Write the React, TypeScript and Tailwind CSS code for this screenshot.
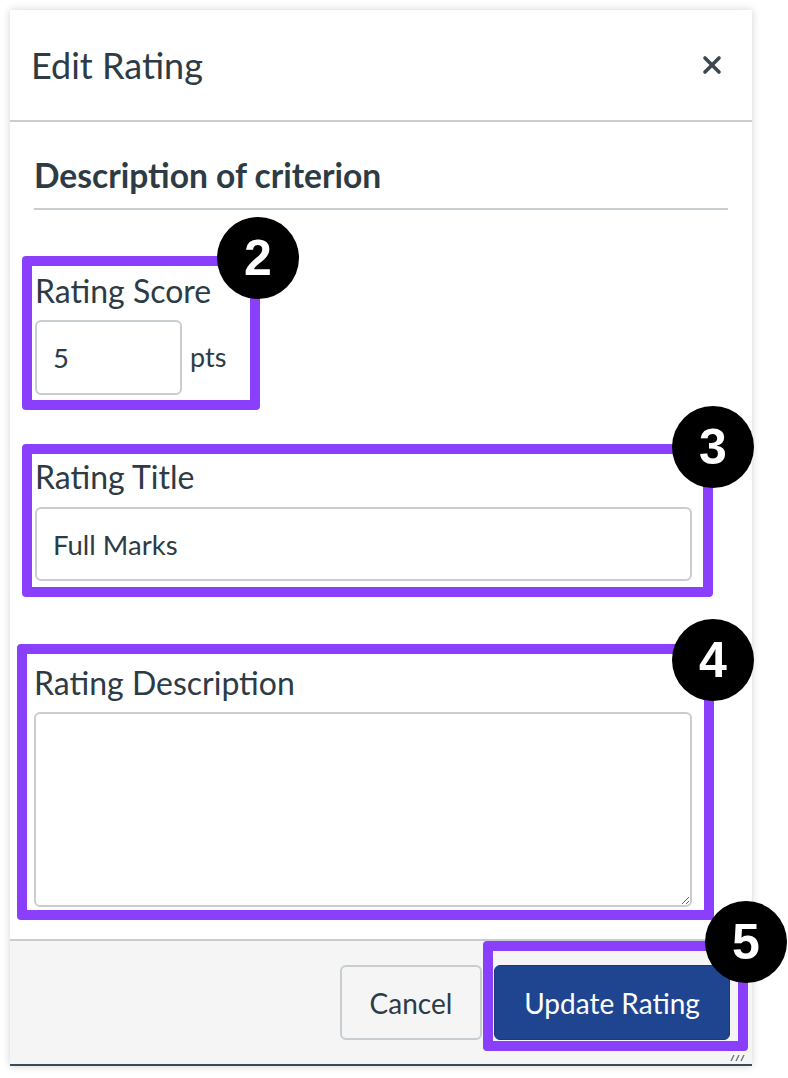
import React from "react"

const font = { fontFamily: "Lato, 'Noto Sans', sans-serif" }

function Badge({ n, className }: { n: string; className: string }) {
  return (
    <div
      className={`absolute z-10 flex h-[82px] w-[82px] items-center justify-center rounded-full bg-black text-[50px] font-bold leading-none text-white ${className}`}
      style={{ fontFamily: "'Liberation Sans', Arial, sans-serif" }}
    >
      {n}
    </div>
  )
}

export default function App() {
  return (
    <div className="h-[1078px] w-[788px] bg-white pl-[10px] pt-[10px] text-[#2d3b45]" style={font}>
      <div className="relative w-[742px] bg-white shadow-[0_0_8px_rgba(0,0,0,0.18)]">
        {/* Header */}
        <div className="flex h-[112px] items-center justify-between border-b-2 border-[#c7cdd1] pl-[21px] pr-[30px]">
          <h1 className="text-[36px] font-normal leading-none">Edit Rating</h1>
          <svg width="20" height="20" viewBox="0 0 20 20" className="text-[#3d4852]">
            <path d="M3 3 L17 17 M17 3 L3 17" stroke="currentColor" strokeWidth="3.6" strokeLinecap="round" />
          </svg>
        </div>

        {/* Body */}
        <div className="pb-[19px] pt-[33px]">
          <div className="mx-[24px] border-b-2 border-[#c7cdd1] pb-[13px]">
            <h2 className="text-[33.6px] font-bold leading-[40px]">Description of criterion</h2>
          </div>

          {/* Rating score */}
          <div className="relative ml-[12px] mt-[46px] w-[238px] rounded-[4px] border-[10px] border-[#8a3ffc] pb-[5px] pl-[3px] pt-[7px]">
            <Badge n="2" className="-right-[49px] -top-[49px]" />
            <label className="block text-[32px] leading-[36px]">Rating Score</label>
            <div className="mt-[11px] flex items-center gap-[8px]">
              <input
                readOnly
                value="5"
                className="h-[75px] w-[147px] rounded-[6px] border-2 border-[#c7cdd1] bg-white px-[16px] text-[27.5px] text-[#2d3b45] outline-none"
                style={font}
              />
              <span className="text-[27px]">pts</span>
            </div>
          </div>

          {/* Rating title */}
          <div className="relative ml-[12px] mt-[34px] w-[691px] rounded-[4px] border-[10px] border-[#8a3ffc] pb-[6px] pl-[3px] pr-[11px] pt-[5px]">
            <Badge n="3" className="-right-[51px] -top-[48px]" />
            <label className="block text-[32px] leading-[36px]">Rating Title</label>
            <input
              readOnly
              value="Full Marks"
              className="mt-[12px] block h-[74px] w-full rounded-[6px] border-2 border-[#c7cdd1] bg-white px-[16px] text-[27.5px] text-[#2d3b45] outline-none"
              style={font}
            />
          </div>

          {/* Rating description */}
          <div className="relative ml-[7px] mt-[47px] w-[697px] rounded-[4px] border-[10px] border-[#8a3ffc] pb-[3px] pl-[7px] pr-[12px] pt-[11px]">
            <Badge n="4" className="-right-[50px] -top-[35px]" />
            <label className="block text-[32px] leading-[36px]">Rating Description</label>
            <textarea
              readOnly
              className="mt-[11px] block h-[195px] w-full rounded-[6px] border-2 border-[#c7cdd1] bg-white px-[16px] py-[10px] text-[26px] outline-none"
              style={font}
            />
          </div>
        </div>

        {/* Footer */}
        <div className="relative flex h-[127px] items-start justify-end border-b-2 border-t-2 border-b-[#394b58] border-t-[#c7cdd1] bg-[#f5f5f5] pr-[4px]">
          <button className="mr-[1px] mt-[24px] h-[75px] w-[142px] rounded-[6px] border-2 border-[#c7cdd1] bg-[#f5f5f5] text-[28px] text-[#2d3b45]" style={font}>
            Cancel
          </button>
          <div className="relative h-[110px] w-[265px] rounded-[4px] border-[10px] border-[#8a3ffc] pl-[1px] pr-[8px] pt-[14px]">
            <Badge n="5" className="-right-[49px] -top-[50px]" />
            <button className="h-[75px] w-full rounded-[6px] border border-[#183a7a] bg-[#1f4591] text-[28px] text-white" style={font}>
              Update Rating
            </button>
          </div>
          <svg width="16" height="10" viewBox="0 0 16 10" className="absolute bottom-[2px] right-[6px]">
            <path d="M1 9 L4 3 M6 9 L9 3 M11 9 L14 3" stroke="#6b7780" strokeWidth="1.4" />
          </svg>
        </div>
      </div>
    </div>
  )
}
